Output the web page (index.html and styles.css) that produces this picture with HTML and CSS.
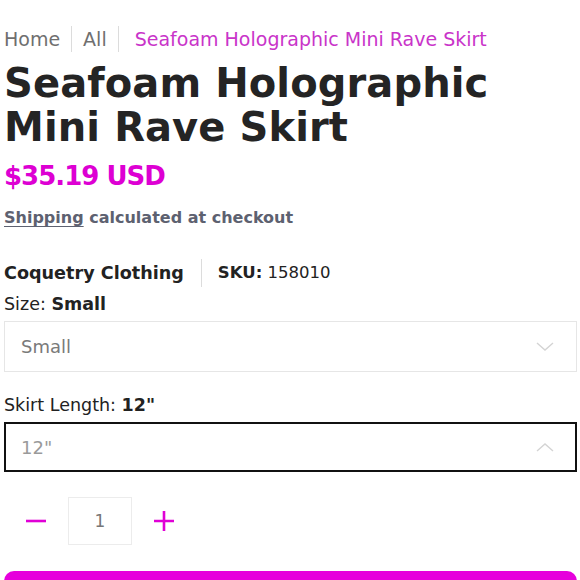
FILE: index.html
```html
<!DOCTYPE html>
<html lang="en">
<head>
<meta charset="utf-8">
<title>Seafoam Holographic Mini Rave Skirt</title>
<link rel="stylesheet" href="styles.css">
</head>
<body>
<main class="product">
  <nav class="crumbs">
    <a class="crumb" href="#">Home</a>
    <a class="crumb" href="#">All</a>
    <span class="crumb current">Seafoam Holographic Mini Rave Skirt</span>
  </nav>
  <h1 class="title">Seafoam Holographic Mini Rave Skirt</h1>
  <p class="price">$35.19 USD</p>
  <p class="shipping"><a href="#">Shipping</a> calculated at checkout</p>
  <div class="meta">
    <span class="vendor">Coquetry Clothing</span>
    <span class="sku"><b>SKU:</b> 158010</span>
  </div>
  <div class="option-label">Size: <b>Small</b></div>
  <div class="select">
    <span class="select-value">Small</span>
    <svg class="chev" width="18" height="10" viewBox="0 0 18 10"><path d="M1 1 L9 8 L17 1" fill="none" stroke="#d4d4d4" stroke-width="1.4"/></svg>
  </div>
  <div class="option-label spaced">Skirt Length: <b>12"</b></div>
  <div class="select open">
    <span class="select-value light">12"</span>
    <svg class="chev" width="18" height="10" viewBox="0 0 18 10"><path d="M1 9 L9 2 L17 9" fill="none" stroke="#d4d4d4" stroke-width="1.4"/></svg>
  </div>
  <div class="qty">
    <button class="qty-btn" aria-label="Decrease"><svg width="22" height="22" viewBox="0 0 22 22"><path d="M1 11 H21" stroke="#e000d6" stroke-width="2.6"/></svg></button>
    <div class="qty-box">1</div>
    <button class="qty-btn" aria-label="Increase"><svg width="22" height="22" viewBox="0 0 22 22"><path d="M1 11 H21 M11 1 V21" stroke="#e000d6" stroke-width="2.6"/></svg></button>
  </div>
  <button class="add">Add to cart</button>
</main>
</body>
</html>
```
FILE: styles.css
```css
html, body {
  margin: 0;
  padding: 0;
  background: #fff;
  overflow: hidden;
}
body {
  font-family: "DejaVu Sans", "Liberation Sans", sans-serif;
  color: #222;
}
.product {
  padding: 0 3px 0 4px;
}
.crumbs {
  display: flex;
  align-items: center;
  height: 26px;
  margin-top: 26px;
  font-size: 19px;
}
.crumb {
  color: #6f6f6f;
  text-decoration: none;
  line-height: 26px;
  padding: 0 11px;
  border-left: 1px solid #dcdcdc;
}
.crumb:first-child {
  padding-left: 0;
  border-left: 0;
}
.crumb.current {
  color: #c934c9;
  padding-left: 16px;
}
.title {
  margin: 9px 0 0;
  font-size: 40px;
  line-height: 44px;
  font-weight: 700;
  color: #242424;
  letter-spacing: 0.1px;
}
.price {
  margin: 10px 0 0;
  font-size: 26px;
  line-height: 34px;
  font-weight: 700;
  color: #dd00d3;
  letter-spacing: -1px;
}
.shipping {
  margin: 13px 0 0;
  font-size: 16px;
  line-height: 24px;
  font-weight: 700;
  color: #5d6170;
}
.shipping a {
  color: #5d6170;
  text-decoration: underline;
  text-underline-offset: 3px;
}
.meta {
  display: flex;
  align-items: center;
  margin-top: 29px;
  line-height: 28px;
}
.vendor {
  font-size: 17.6px;
  font-weight: 700;
  padding-right: 17px;
  border-right: 1px solid #dcdcdc;
}
.sku {
  font-size: 16.5px;
  padding-left: 16px;
}
.option-label {
  margin-top: 5px;
  font-size: 17.5px;
  line-height: 24px;
}
.option-label.spaced {
  margin-top: 21px;
}
.select {
  display: flex;
  align-items: center;
  justify-content: space-between;
  height: 51px;
  margin-top: 5px;
  padding: 0 22px 0 16px;
  border: 1px solid #e6e6e6;
  box-sizing: border-box;
}
.select.open {
  border: 2px solid #111;
  padding-left: 15px;
  padding-right: 21px;
  height: 50px;
}
.select-value {
  font-size: 18px;
  color: #7a7a7a;
}
.select-value.light {
  color: #9a9a9a;
}
.qty {
  display: flex;
  align-items: center;
  margin-top: 25px;
}
.qty-btn {
  background: none;
  border: 0;
  padding: 0;
  width: 64px;
  height: 48px;
  display: flex;
  align-items: center;
  justify-content: center;
  cursor: pointer;
}
.qty-box {
  width: 64px;
  height: 48px;
  border: 1px solid #ececec;
  box-sizing: border-box;
  display: flex;
  align-items: center;
  justify-content: center;
  font-size: 17px;
  color: #777;
}
.add {
  display: block;
  width: 100%;
  height: 60px;
  margin-top: 26px;
  border: 0;
  border-radius: 10px;
  background: #e600dc;
  color: #fff;
  font-family: inherit;
  font-size: 18px;
  font-weight: 700;
}
```
